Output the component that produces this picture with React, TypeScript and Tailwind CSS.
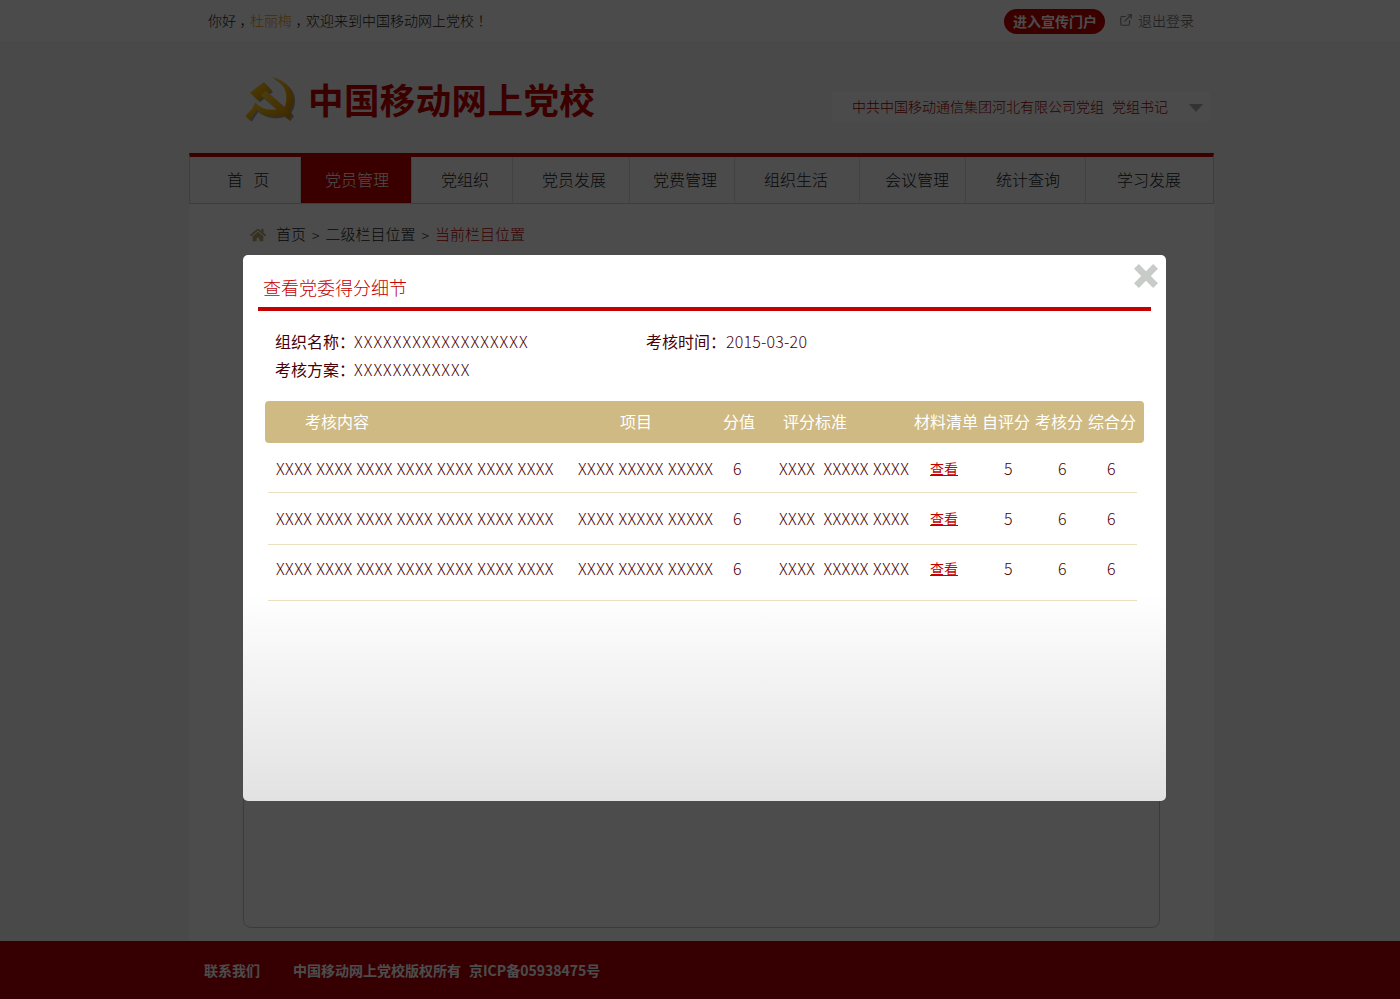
import { FaHome } from "react-icons/fa";
import { ExternalLink } from "lucide-react";

const menu = [
  { label: "首   页", w: "w-[111px] pl-[37px]" },
  { label: "党员管理", w: "w-[111px] pl-[24px]", active: true },
  { label: "党组织", w: "w-[101px] pl-[29px]" },
  { label: "党员发展", w: "w-[117px] pl-[29px]" },
  { label: "党费管理", w: "w-[105px] pl-[23px]" },
  { label: "组织生活", w: "w-[125px] pl-[29px]" },
  { label: "会议管理", w: "w-[106px] pl-[25px]" },
  { label: "统计查询", w: "w-[120px] pl-[30px]" },
  { label: "学习发展", w: "flex-1 pl-[31px]" },
];

const rows = [
  { h: "h-[50px]", line: "" },
  { h: "h-[52px]", line: "pb-[2px]" },
  { h: "h-[56px]", line: "pb-[10px]" },
];

// full width punctuation sits centred in the cell in the reference
function Punct({ children }: { children: string }) {
  return (
    <span className="inline-block w-[14px] text-center [font-feature-settings:'halt']">{children}</span>
  );
}

function Logo() {
  const shape = (
    <>
      <path d="M30 100 72 68 94 92 55 124Z" />
      <path d="M62 108 78 94 157 165 146 181Z" />
      <path d="M95 52C135 62 162 90 160 122 160 135 155 148 147 160L132 146C142 130 142 100 130 82 122 70 108 60 95 52Z" />
      <path d="M45 128C60 150 100 160 130 142L147 160C115 180 70 172 50 152L30 182 16 170 38 146Z" />
    </>
  );
  return (
    <svg width="53" height="48" viewBox="15 50 159 144" className="shrink-0">
      <defs>
        <linearGradient id="gold" x1="0" y1="0" x2="1" y2="1">
          <stop offset="0" stopColor="#ffd23c" />
          <stop offset="0.6" stopColor="#e8a800" />
          <stop offset="1" stopColor="#c98400" />
        </linearGradient>
      </defs>
      <g transform="translate(5 5)" fill="#000" opacity="0.35">
        {shape}
      </g>
      <g fill="url(#gold)">{shape}</g>
    </svg>
  );
}

export default function App() {
  return (
    <div
      className="relative h-[999px] overflow-hidden bg-[#f4f4f4] font-light text-[#222]"
      style={{ fontFamily: '"Noto Sans CJK SC", "Liberation Sans", sans-serif' }}
    >
      {/* top bar */}
      <div className="h-[43px] border-b border-[#eee] bg-[#fafafa]">
        <div className="ml-[189px] flex h-full w-[1025px] items-center justify-between pb-[2px] pl-[19px] pr-[20px] text-sm">
          <div>
            你好<Punct>，</Punct>
            <span className="text-[#e8960c]">杜丽梅</span>
            <Punct>，</Punct>欢迎来到中国移动网上党校<Punct>！</Punct>
          </div>
          <div className="flex items-center">
            <span className="mt-[2px] flex h-[25px] w-[101px] items-center justify-center rounded-full bg-[#c40000] pb-[1px] pl-[1px] font-bold text-[#fff]">
              进入宣传门户
            </span>
            <ExternalLink size={14} className="ml-[14px] mr-[5px] text-[#888]" />
            <span className="text-[#555]">退出登录</span>
          </div>
        </div>
      </div>

      {/* logo */}
      <div className="ml-[189px] flex h-[110px] w-[1025px] items-start justify-between">
        <div className="ml-[56px] mt-[33px] flex items-center gap-[10px]">
          <Logo />
          <span className="mt-[-2px] text-[35.5px] font-bold leading-[50px] tracking-[0.4px] text-[#c40000]">
            中国移动网上党校
          </span>
        </div>
        <div className="mr-[4px] mt-[49px] flex h-[30px] w-[378px] items-center justify-between bg-[#fbfbfb] pb-[2px] pl-[20px] pr-[7px] text-sm text-[#a00000]">
          <span>
            中共中国移动通信集团河北有限公司党组<span className="ml-[8px]">党组书记</span>
          </span>
          <span className="mt-[4px] h-0 w-0 border-x-[7px] border-t-[8px] border-x-transparent border-t-[#aaa]" />
        </div>
      </div>

      {/* nav */}
      <div className="ml-[189px] flex h-[51px] w-[1025px] border-x border-b border-t-4 border-x-[#ccc] border-b-[#ccc] border-t-[#c40000] bg-[#fafafa]">
        {menu.map((m) => (
          <div
            key={m.label}
            className={`flex items-center whitespace-pre border-r border-[#ddd] pb-[2px] text-base last:border-r-0 ${m.w} ${
              m.active ? "bg-[#c40000] text-[#fff]" : ""
            }`}
          >
            {m.label}
          </div>
        ))}
      </div>

      {/* content */}
      <div className="ml-[189px] h-[737px] w-[1025px] bg-[#fff] px-[54px] pt-[20px]">
        <div className="flex h-[22px] items-center pb-[1px] pl-[7px] text-[15px]">
          <FaHome size={16} className="mr-[10px] text-[#b9a36b]" />
          <span>首页</span>
          <span className="mx-[6px] text-sm">&gt;</span>
          <span>二级栏目位置</span>
          <span className="mx-[6px] text-sm">&gt;</span>
          <span className="text-[#c40000]">当前栏目位置</span>
        </div>
        <div className="mt-[10px] h-[672px] w-[917px] rounded-[8px] border border-[#d9c98c]" />
      </div>

      {/* footer */}
      <div className="h-[58px] bg-[#b40008]">
        <div className="ml-[189px] flex h-full w-[1025px] items-center pl-[15px] text-sm font-bold text-[#fff]">
          <span>联系我们</span>
          <span className="ml-[33px]">中国移动网上党校版权所有</span>
          <span className="ml-[8px]">京ICP备05938475号</span>
        </div>
      </div>

      {/* overlay */}
      <div className="absolute inset-0 bg-[#000]/70" />

      {/* dialog */}
      <div className="absolute left-[243px] top-[255px] h-[546px] w-[923px] rounded-[5px] bg-gradient-to-b from-[#fff] from-[62%] to-[#e2e2e2] px-[15px] text-[#4a0004]">
        <button className="absolute right-[8px] top-[9px]">
          <svg width="24" height="24" viewBox="0 0 25 25" className="block">
            <path
              fill="#c8ccc8"
              d="M5 0l7.500 7.500L20 0l5 5-7.500 7.500L25 20l-5 5-7.500-7.500L5 25l-5-5 7.500-7.500L0 5z"
            />
          </svg>
        </button>
        <div className="h-[56px] border-b-4 border-[#c40000] pl-[5px] pt-[19px] text-lg leading-[26px] text-[#c40000]">
          查看党委得分细节
        </div>
        <div className="pl-[17px] pt-[16px] text-base">
          <div className="flex h-[28px] items-center whitespace-nowrap">
            <div className="flex w-[371px]">
              <span className="w-[79px] font-normal">组织名称：</span>
              <span className="tracking-[1.05px]">XXXXXXXXXXXXXXXXXX</span>
            </div>
            <span className="w-[80px] font-normal">考核时间：</span>
            <span className="tracking-[0.2px]">2015-03-20</span>
          </div>
          <div className="flex h-[28px] items-center whitespace-nowrap">
            <span className="w-[79px] font-normal">考核方案：</span>
            <span className="tracking-[1.05px]">XXXXXXXXXXXX</span>
          </div>
        </div>

        <div className="ml-[7px] mt-[18px] w-[879px]">
          <div className="grid h-[42px] grid-cols-[307px_148px_50px_142px_68px_54px_52px_58px] items-center rounded-[4px] bg-[#cfba83] pb-[2px] text-base font-normal text-[#fff]">
            <span className="pl-[40px]">考核内容</span>
            <span className="pl-[48px]">项目</span>
            <span className="pl-[3px]">分值</span>
            <span className="pl-[13px]">评分标准</span>
            <span className="pl-[2px]">材料清单</span>
            <span className="pl-[2px]">自评分</span>
            <span className="pl-[1px]">考核分</span>
            <span className="pl-[2px]">综合分</span>
          </div>
          {rows.map((r, i) => (
            <div
              key={i}
              className={`ml-[3px] mr-[7px] grid grid-cols-[304px_148px_50px_142px_68px_54px_52px_51px] items-center whitespace-pre border-b border-[#eadfbf] text-base ${r.h} ${r.line}`}
            >
              <span className="pl-[8px] tracking-[0.42px]">XXXX XXXX XXXX XXXX XXXX XXXX XXXX</span>
              <span className="pl-[6px] tracking-[0.45px]">XXXX XXXXX XXXXX</span>
              <span className="pl-[13px]">6</span>
              <span className="pl-[9px] tracking-[0.45px]">XXXX  XXXXX XXXX</span>
              <span className="pl-[18px] text-sm font-normal text-[#c40000] underline">查看</span>
              <span className="pl-[24px]">5</span>
              <span className="pl-[24px]">6</span>
              <span className="pl-[21px]">6</span>
            </div>
          ))}
        </div>
      </div>
    </div>
  );
}
